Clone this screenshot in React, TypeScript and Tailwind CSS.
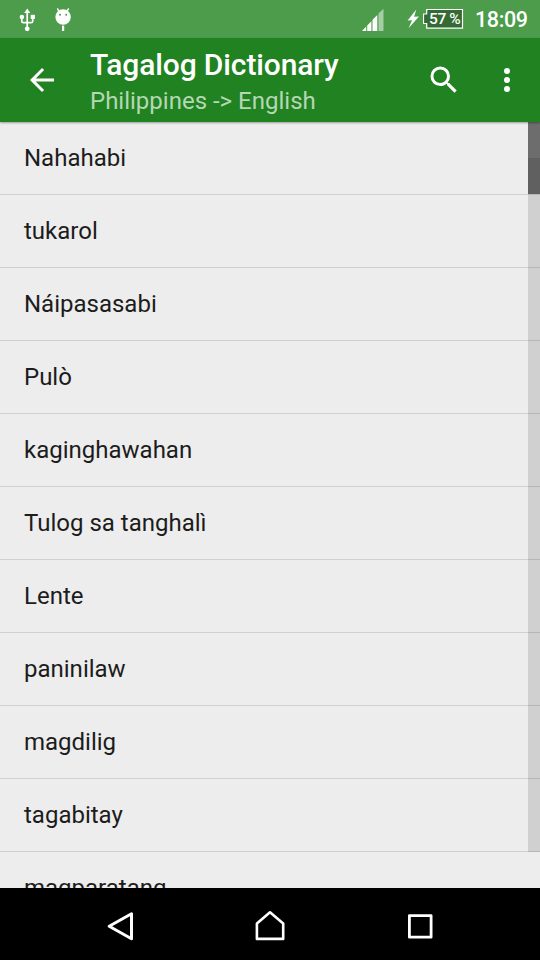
const words = [
    'Nahahabi',
    'tukarol',
    'Náipasasabi',
    'Pulò',
    'kaginghawahan',
    'Tulog sa tanghalì',
    'Lente',
    'paninilaw',
    'magdilig',
    'tagabitay',
    'magparatang',
]

const StatusBar = () => {
    return (
        <div className="flex h-[38px] shrink-0 items-center bg-[#4c9c4c] text-white">
            <svg className="ml-[19px] h-[38px] w-4" viewBox="0 0 16 38" fill="none" stroke="currentColor" strokeWidth="1.7">
                <path d="M8.2 12v16M2.8 18v3.2q0 1.5 1.5 1.5h7.9q1.5 0 1.5-1.5V18" />
                <path d="M8.2 8.6 11.2 13H5.2z" fill="currentColor" stroke="none" />
                <circle cx="2.9" cy="17" r="2.3" fill="currentColor" stroke="none" />
                <path d="M11.7 14.8h4.2v4.2h-4.2z" fill="currentColor" stroke="none" />
                <circle cx="8.2" cy="28.8" r="2.4" fill="currentColor" stroke="none" />
            </svg>
            <svg className="ml-5 h-[38px] w-[17px]" viewBox="0 0 17 38" fill="none">
                <path d="M2.3 8.5l2 3M13.7 8.5l-2 3" stroke="currentColor" strokeWidth="1.4" />
                <circle cx="8.1" cy="17" r="7.7" fill="currentColor" />
                <path d="M8.1 25.6v5.4" stroke="currentColor" strokeWidth="2.2" />
                <circle cx="5" cy="14.8" r="1" fill="#4c9c4c" />
                <circle cx="11.2" cy="14.8" r="1" fill="#4c9c4c" />
            </svg>
            <svg className="ml-auto h-[38px] w-6" viewBox="0.5 0 24 38" fill="currentColor">
                <path d="M0.5 31 4.7 26.5V31zM5.7 25.4 9.9 21.2V31H5.700zM11 19.800 15.800 15V31H11z" />
                <path d="M17 13.500 22 8.800V31H17z" opacity="0.5" />
            </svg>
            <svg className="ml-[21px] h-[38px] w-3" viewBox="0 0 12 38" fill="currentColor">
                <path d="M9.3 9.6 0.6 20.6l4.500-.4L1.500 28.200 12 16.500l-4.900.3z" />
            </svg>
            <div className="relative ml-1 h-[38px] w-[41px]">
                <svg className="h-[38px] w-[41px]" viewBox="0 0 41 38">
                    <path d="M3.7 9.5H39.500V28.200H3.700V23.500H0.500V14H3.700z" fill="#346b34" stroke="#fff" strokeWidth="1.2" />
                </svg>
                <span className="absolute left-[6px] top-[11px] whitespace-nowrap text-[15.5px] font-medium leading-4 tracking-[-0.4px]">57 %</span>
            </div>
            <span className="ml-[11px] w-[65px] pt-[2px] text-[21.5px] font-medium leading-9 tracking-[-0.4px]">18:09</span>
        </div>
    )
}

const AppBar = () => {
    return (
        <div className="relative z-10 flex h-[84px] shrink-0 items-center bg-[#218221] text-white shadow-[0_1px_2px_rgba(0,0,0,0.35)]">
            <svg className="ml-6 h-9 w-9" viewBox="0 0 24 24" fill="currentColor">
                <path d="M20 11H7.83l5.590-5.590L12 4l-8 8 8 8 1.410-1.410L7.830 13H20v-2z" />
            </svg>
            <div className="ml-[30px] flex-1 whitespace-nowrap pt-[6px]">
                <h1 className="text-[30px] font-medium leading-9 tracking-[-0.12px]">Tagalog Dictionary</h1>
                <p className="text-2xl leading-9 text-[#b5d7b5]">Philippines -&gt; English</p>
            </div>
            <svg className="h-9 w-9" viewBox="0 0 24 24" fill="currentColor">
                <path d="M15.5 14h-.79l-.28-.27A6.470 6.470 0 0 0 16 9.500 6.500 6.500 0 1 0 9.500 16c1.610 0 3.090-.590 4.230-1.570l.270.280v.790l5 4.990L20.490 19l-4.990-5zm-6 0C7.010 14 5 11.990 5 9.500S7.010 5 9.500 5 14 7.010 14 9.500 11.990 14 9.500 14z" />
            </svg>
            <svg className="ml-[27.5px] mr-[15px] h-9 w-9" viewBox="0 0 24 24" fill="currentColor">
                <circle cx="12" cy="6" r="2" />
                <circle cx="12" cy="12" r="2" />
                <circle cx="12" cy="18" r="2" />
            </svg>
        </div>
    )
}

const NavBar = () => {
    return (
        <div className="flex h-[72px] shrink-0 items-center justify-center gap-[114px] bg-black pt-1 text-white">
            <svg className="h-9 w-9" viewBox="0 0 36 36" fill="none" stroke="currentColor" strokeWidth="3" strokeLinejoin="round">
                <path d="M7.2 18.3 29.5 5.8v25z" />
            </svg>
            <svg className="h-9 w-9" viewBox="0 0 36 36" fill="none" stroke="currentColor" strokeWidth="2.6" strokeLinejoin="round">
                <path d="M4.9 30.9V15.5L18 4.3l13.200 11.200v15.400z" />
            </svg>
            <svg className="h-9 w-9" viewBox="0 0 36 36" fill="none" stroke="currentColor" strokeWidth="2.8" strokeLinejoin="round">
                <path d="M7.4 7.6h21.700v21.600H7.400z" />
            </svg>
        </div>
    )
}

export default function App() {
    return (
        <div className="flex h-[960px] w-[540px] flex-col overflow-hidden bg-[#ededed] font-[Roboto,sans-serif]">
            <StatusBar />
            <AppBar />
            <div className="relative min-h-0 flex-1 overflow-hidden">
                <ul>
                    {words.map((word) => (
                        <li key={word} className="flex h-[73px] items-center border-b border-[#d0d0d0] pl-6 text-2xl text-[#1c1c1c]">
                            {word}
                        </li>
                    ))}
                </ul>
                {/* scroll track and thumb */}
                <div className="absolute right-0 top-0 h-[730px] w-3 bg-black/12">
                    <div className="h-9 bg-[#6d6d6d]" />
                    <div className="h-9 bg-[#606060]" />
                </div>
            </div>
            <NavBar />
        </div>
    )
}
